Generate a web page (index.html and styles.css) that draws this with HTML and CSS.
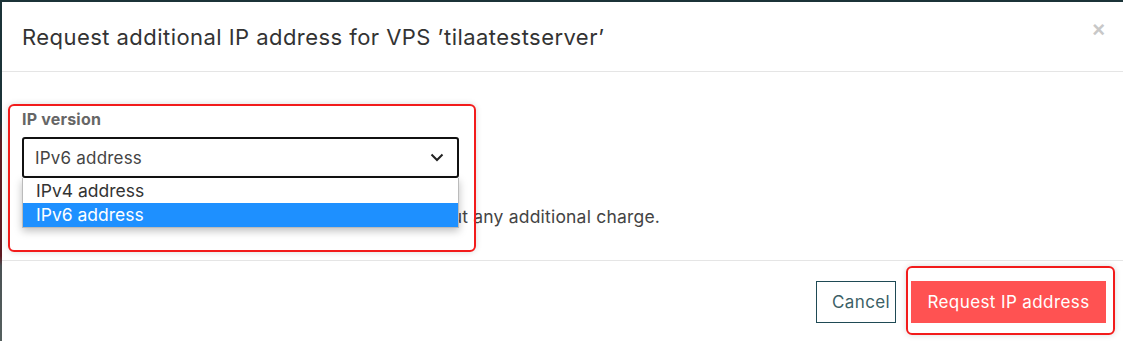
FILE: index.html
```html
<!DOCTYPE html>
<html lang="en">
<head>
    <meta charset="UTF-8">
    <title>Request additional IP address</title>
    <link rel="stylesheet" href="styles.css">
</head>
<body>
    <div class="modal">
        <div class="modal-header">
            <h4 class="modal-title">Request additional IP address for VPS ’tilaatestserver’</h4>
            <button class="close" type="button">&times;</button>
        </div>
        <div class="modal-body">
            <div class="form-group">
                <label class="form-label">IP version</label>
                <div class="select-wrap">
                    <div class="select">
                        <span>IPv6 address</span>
                        <svg class="chevron" width="14" height="9" viewBox="0 0 14 9"><path d="M1.5 1.5 L7 7 L12.5 1.5" fill="none" stroke="#222" stroke-width="2"/></svg>
                    </div>
                    <ul class="options">
                        <li>IPv4 address</li>
                        <li class="selected">IPv6 address</li>
                    </ul>
                </div>
            </div>
            <p class="note">An additional IPv6 address can be requested without any additional charge.</p>
        </div>
        <div class="modal-footer">
            <button class="btn btn-cancel" type="button">Cancel</button>
            <button class="btn btn-primary" type="button">Request IP address</button>
        </div>

        <!-- annotation boxes -->
        <div class="mark mark-field"></div>
        <div class="mark mark-button"></div>
    </div>
</body>
</html>
```

FILE: styles.css
```css
/* Page */
body {
    margin: 0;
    padding: 2px 0 0 2px;
    height: 341px;
    box-sizing: border-box;
    overflow: hidden;
    font-family: 'Inter', 'Noto Sans', sans-serif;
    color: #333;
    background: linear-gradient(to bottom, #1b3338 0, #1b3338 35%, #5e1a21 42%, #5e1a21 75%, #4a5254 78%, #55605f 100%);
}

/* Modal */
.modal {
    position: relative;
    background-color: white;
    height: 100%;
}

.modal-header {
    height: 69px;
    display: flex;
    align-items: center;
    justify-content: space-between;
    padding: 0 18px 0 20px;
    border-bottom: 1px solid #e5e5e5;
}

.modal-title {
    margin: 0;
    font-size: 22px;
    font-weight: 400;
    color: #333;
    letter-spacing: 0.45px;
}

.close {
    border: none;
    background: none;
    padding: 0;
    font-size: 22px;
    font-weight: bold;
    color: #c8c8c8;
    line-height: 1;
    margin-top: -14px;
}

.modal-body {
    height: 189px;
    padding: 0 20px;
    border-bottom: 1px solid #e5e5e5;
    box-sizing: border-box;
}

.form-group {
    padding-top: 37px;
}

.form-label {
    display: block;
    font-size: 16px;
    font-weight: 700;
    color: #666;
    letter-spacing: 0.2px;
    margin-bottom: 8px;
}

.select-wrap {
    position: relative;
    width: 437px;
}

.select {
    height: 41px;
    box-sizing: border-box;
    border: 2px solid #111;
    border-radius: 3px;
    display: flex;
    align-items: center;
    justify-content: space-between;
    padding: 0 13px 0 11px;
    font-size: 17px;
    letter-spacing: 0.2px;
    color: #444;
}

.options {
    position: absolute;
    top: 41px;
    left: 0;
    right: 0;
    margin: 0;
    padding: 1px 0 0;
    list-style: none;
    background: white;
    border: 1px solid #bbb;
    border-top: none;
    box-shadow: 0 3px 8px rgba(0, 0, 0, 0.25);
    font-size: 17.5px;
    color: #333;
    z-index: 2;
}

.options li {
    height: 24px;
    line-height: 24px;
    padding-left: 13px;
}

.options li.selected {
    background-color: #1e90ff;
    color: white;
}

.note {
    margin: 28px 0 0;
    font-size: 17.5px;
    letter-spacing: 0.2px;
    color: #444;
    white-space: nowrap;
}

.modal-footer {
    display: flex;
    justify-content: flex-end;
    gap: 15px;
    padding: 20px 17px 0 0;
}

.btn {
    height: 42px;
    font-family: inherit;
    font-size: 17px;
    letter-spacing: 0.4px;
    cursor: pointer;
}

.btn-cancel {
    width: 80px;
    padding: 0 0 0 10px;
    background: white;
    border: 1px solid #1f4a55;
    color: #3c5f66;
}

.btn-primary {
    width: 195px;
    background-color: #ff5252;
    border: none;
    color: white;
}

/* Annotation boxes */
.mark {
    position: absolute;
    border: 2px solid #f21b1b;
    border-radius: 6px;
    box-shadow: 0 0 6px rgba(0, 0, 0, 0.15);
    z-index: 3;
}

.mark-field {
    left: 6px;
    top: 102px;
    width: 464px;
    height: 144px;
}

.mark-button {
    left: 904px;
    top: 264px;
    width: 205px;
    height: 65px;
}
```
